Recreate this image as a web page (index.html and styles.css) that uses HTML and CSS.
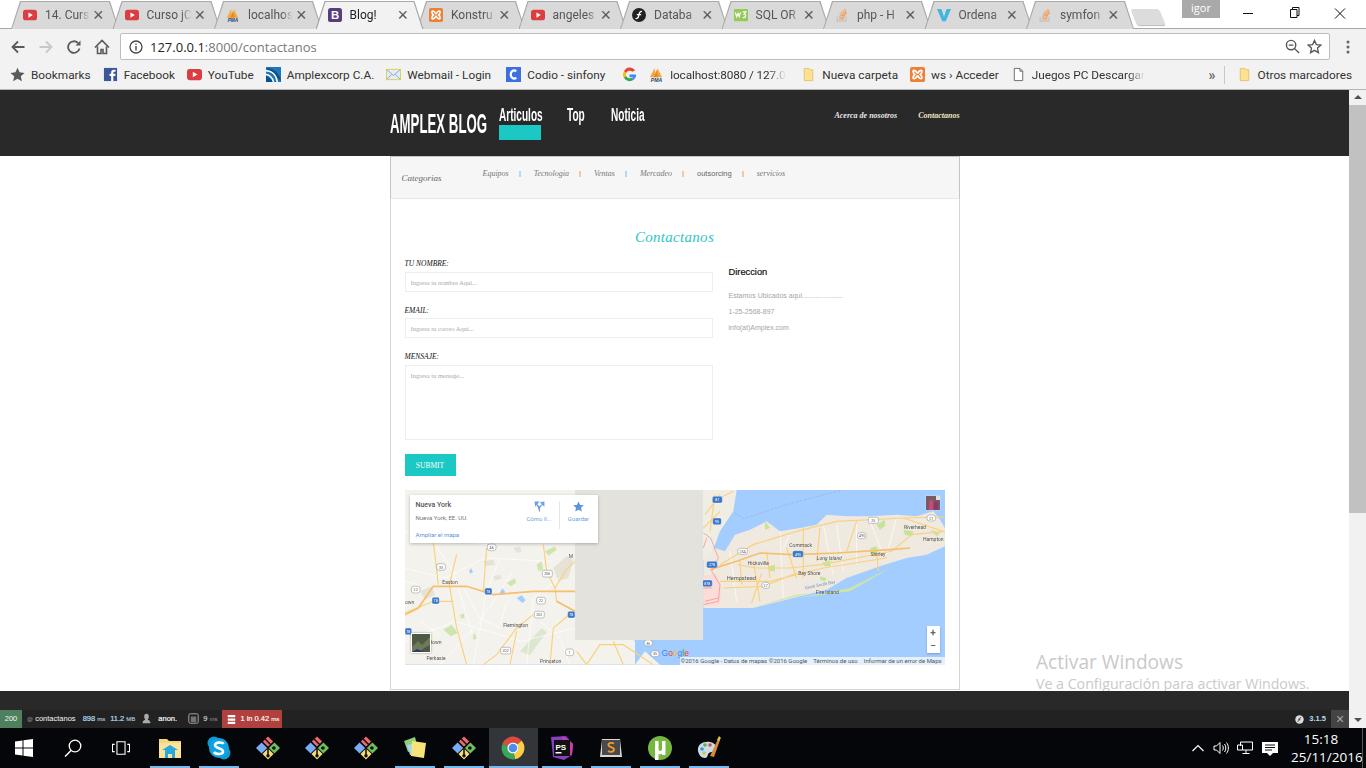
FILE: index.html
```html
<!DOCTYPE html>
<html lang="es">
<head>
  <meta charset="UTF-8" />
  <title>Blog!</title>
  <link rel="stylesheet" href="styles.css">
</head>
<body>
  <!-- iconos compartidos -->
  <svg class="defs" width="0" height="0">
    <symbol id="yt" viewBox="0 0 16 16"><rect y="2" width="16" height="12" rx="3" fill="#dc3d40"/><path d="M6.2 5l5 3-5 3z" fill="#fff"/></symbol>
    <symbol id="pma" viewBox="0 0 16 16"><path d="M1 11L6 1l1 10zM7.500 11L9 1l5 10z" fill="#f5a742"/><path d="M5 11L8 3l2 8z" fill="#e88a1f"/><text x="8" y="16" class="pma-t">PMA</text></symbol>
    <symbol id="boot" viewBox="0 0 16 16"><rect width="16" height="16" rx="3" fill="#563d7c"/><text x="8" y="13" class="boot-t">B</text></symbol>
    <symbol id="xampp" viewBox="0 0 16 16"><rect width="16" height="16" rx="2" fill="#ee7f35"/><path d="M4 3.500c3 0 3 3 4 3s1-3 4-3c1 0 1 3-1 4.500 2 1.500 2 4.500 1 4.500-3 0-3-3-4-3s-1 3-4 3c-1 0-1-3 1-4.500C3 6.500 3 3.500 4 3.500z" fill="none" stroke="#fff" stroke-width="1.800"/></symbol>
    <symbol id="sf" viewBox="0 0 16 16"><circle cx="8" cy="8" r="8" fill="#222"/><path d="M11.500 4c-2.500-.5-3 1-3.500 3.500-.5 3-1 5-4 4.500M5.500 7.500h5" fill="none" stroke="#fff" stroke-width="1.400"/></symbol>
    <symbol id="w3" viewBox="0 0 16 16"><rect y="1" width="16" height="14" rx="1" fill="#95ca5a"/><path d="M1.500 5l1.500 5 1.500-4 1.500 4 1.500-5M10 4.500h3.500l-2 2.500c2.500 0 2.500 4-.5 4l-1-.5" fill="none" stroke="#fff" stroke-width="1.300"/></symbol>
    <symbol id="so" viewBox="0 0 16 16"><path d="M2.500 10v5h10v-5" fill="none" stroke="#c7c1b8" stroke-width="1.300"/><path d="M4.500 12.500h6M4.700 10l6 .8M5.300 7.600l5.800 1.700M6.500 5.200l5.200 3M8.500 3l4 4.300M11 1.200l2 5.300" fill="none" stroke="#f0a061" stroke-width="1.300"/></symbol>
    <symbol id="vue" viewBox="0 0 16 16"><path d="M0 1h5l3 9 3-9h5L10 15H6z" fill="#3fb6e2"/></symbol>
    <symbol id="folder" viewBox="0 0 16 16"><path d="M3.500 1.500h5l1 1.500h3v11.500h-9z" fill="#fde293" stroke="#e3c26a"/></symbol>
    <symbol id="git" viewBox="0 0 28 28"><path d="M8 7l6-6 6 6-6 6z" fill="#ee6a70" transform="translate(0 -0.500)"/><path d="M15 14l6.500-6.500L28 14l-6.500 6.500z" fill="#6fc05c"/><path d="M0 14l6.500-6.500L13 14l-6.500 6.500z" fill="#78aef5"/><path d="M7.500 21l6.500-6.500 6.500 6.500-6.500 6.500z" fill="#f6dc74"/><path d="M10 3l7 7M14 12v10M19 14h3" stroke="#111" stroke-width="1.800" fill="none"/><circle cx="14" cy="23" r="2" fill="#111"/><circle cx="21" cy="14" r="2" fill="#111"/></symbol>
  </svg>

  <header class="chrome-top">
    <div class="tabs">
      <div class="tab"><svg class="fav"><use href="#yt"/></svg><span class="tab-title">14. Curs</span><span class="tab-x">&times;</span></div>
      <div class="tab"><svg class="fav"><use href="#yt"/></svg><span class="tab-title">Curso jC</span><span class="tab-x">&times;</span></div>
      <div class="tab"><svg class="fav"><use href="#pma"/></svg><span class="tab-title">localhos</span><span class="tab-x">&times;</span></div>
      <div class="tab active"><svg class="fav"><use href="#boot"/></svg><span class="tab-title">Blog!</span><span class="tab-x">&times;</span></div>
      <div class="tab"><svg class="fav"><use href="#xampp"/></svg><span class="tab-title">Konstru</span><span class="tab-x">&times;</span></div>
      <div class="tab"><svg class="fav"><use href="#yt"/></svg><span class="tab-title">angeles</span><span class="tab-x">&times;</span></div>
      <div class="tab"><svg class="fav"><use href="#sf"/></svg><span class="tab-title">Databa</span><span class="tab-x">&times;</span></div>
      <div class="tab"><svg class="fav"><use href="#w3"/></svg><span class="tab-title">SQL OR</span><span class="tab-x">&times;</span></div>
      <div class="tab"><svg class="fav"><use href="#so"/></svg><span class="tab-title">php - H</span><span class="tab-x">&times;</span></div>
      <div class="tab"><svg class="fav"><use href="#vue"/></svg><span class="tab-title">Ordena</span><span class="tab-x">&times;</span></div>
      <div class="tab"><svg class="fav"><use href="#so"/></svg><span class="tab-title">symfon</span><span class="tab-x">&times;</span></div>
      <div class="new-tab"></div>
    </div>
    <div class="profile">igor</div>
    <div class="win-btns">
      <svg viewBox="0 0 46 26"><path d="M18 13.500h10" stroke="#111" fill="none"/></svg>
      <svg viewBox="0 0 46 26"><path d="M19.500 9.500h6.500v8h-6.500zM21.500 9.500v-2h6.500v8h-2" stroke="#111" fill="none"/></svg>
      <svg viewBox="0 0 46 26"><path d="M18 8.500l10 10M28 8.500l-10 10" stroke="#111" fill="none"/></svg>
    </div>
  </header>

  <div class="toolbar">
    <svg class="nav-ico" viewBox="0 0 16 16"><path d="M14.500 8H2.500M8 2.500L2.500 8 8 13.500" fill="none" stroke="#5a5a5a" stroke-width="1.800"/></svg>
    <svg class="nav-ico" viewBox="0 0 16 16"><path d="M1.500 8h12M8 2.500L13.500 8 8 13.500" fill="none" stroke="#c8c8c8" stroke-width="1.800"/></svg>
    <svg class="nav-ico" viewBox="0 0 16 16"><path d="M13.500 9.500A5.800 5.800 0 1 1 12 4" fill="none" stroke="#5a5a5a" stroke-width="1.800"/><path d="M14.500 1.500v5h-5z" fill="#5a5a5a"/></svg>
    <svg class="nav-ico" viewBox="0 0 16 16"><path d="M1 8.500L8 1.500l7 7M3.500 7.500v7h3.500v-4h2v4h3.500v-7" fill="none" stroke="#5a5a5a" stroke-width="1.600"/></svg>
    <div class="omnibox">
      <svg class="info" viewBox="0 0 14 14"><circle cx="7" cy="7" r="6" fill="none" stroke="#444" stroke-width="1.300"/><path d="M7 6v4.500M7 3.500v1.300" stroke="#444" stroke-width="1.400"/></svg>
      <span class="url">127.0.0.1<span class="url-dim">:8000/contactanos</span></span>
      <svg class="omni-zoom" viewBox="0 0 16 16"><circle cx="6.500" cy="6.500" r="5" fill="none" stroke="#555" stroke-width="1.500"/><path d="M10 10l5 5M4 6.500h5" stroke="#555" stroke-width="1.500"/></svg>
      <svg class="omni-star" viewBox="0 0 16 16"><path d="M8 1.500l2 4.500 4.800.5-3.600 3.200 1 4.800L8 12.100l-4.200 2.400 1-4.800L1.200 6.500 6 6z" fill="none" stroke="#555" stroke-width="1.400"/></svg>
    </div>
    <svg class="menu-dots" viewBox="0 0 4 16"><circle cx="2" cy="3" r="1.500"/><circle cx="2" cy="8" r="1.500"/><circle cx="2" cy="13" r="1.500"/></svg>
  </div>

  <div class="bookmarks">
    <span class="bm"><svg class="fav" viewBox="0 0 16 16"><path d="M8 .800l2.200 4.900 5.300.6-4 3.500 1.200 5.300L8 12.400l-4.700 2.700 1.200-5.300-4-3.500 5.300-.6z" fill="#5a5a5a"/></svg>Bookmarks</span>
    <span class="bm"><svg class="fav" viewBox="0 0 16 16"><rect x="1" y="1" width="14" height="14" fill="#3b5998"/><path d="M11 15V9.500h2l.3-2.300H11V6c0-.7.300-1 1-1h1.300V3h-1.800C9.700 3 8.700 4 8.700 5.700v1.500H7v2.300h1.700V15z" fill="#fff"/></svg>Facebook</span>
    <span class="bm"><svg class="fav"><use href="#yt"/></svg>YouTube</span>
    <span class="bm"><svg class="fav" viewBox="0 0 16 16"><rect width="16" height="16" fill="#1d77bd"/><path d="M0 9l9 7H0zM0 1c8 0 15 6 16 14" fill="#0b4f88"/><path d="M0 4c6 0 11 4 12 12M0 8c3 0 7 3 8 8" fill="none" stroke="#fff" stroke-width="1.600"/></svg>Amplexcorp C.A.</span>
    <span class="bm bm-mail"><svg class="fav" viewBox="0 0 16 16"><rect x=".5" y="2.500" width="15" height="11" fill="#e4edf7" stroke="#d9d24f"/><path d="M1 3l7 6 7-6M1 13l5-5M15 13l-5-5" fill="none" stroke="#8aa3bf"/></svg>Webmail - Login</span>
    <span class="bm bm-codio"><svg class="fav" viewBox="0 0 16 16"><rect width="16" height="16" fill="#3c6fe0"/><path d="M11 4.500c-3-2-6 0-6 3.500s3 5.500 6 3.500" fill="none" stroke="#fff" stroke-width="2.400"/></svg>Codio - sinfony</span>
    <span class="bm"><svg class="fav" viewBox="0 0 16 16"><path d="M14 3.500A7 7 0 0 0 2 4.500l2.500 2A4 4 0 0 1 11 5z" fill="#ea4335"/><path d="M2 4.500a7 7 0 0 0 0 7l2.500-2a4 4 0 0 1 0-3z" fill="#fbbc05"/><path d="M2 11.500a7 7 0 0 0 10.500 2l-2.300-2A4 4 0 0 1 4.500 9.500z" fill="#34a853"/><path d="M15 8H8v3h3.800c-.3.600-.8 1.100-1.600.6l2.300 2C14.300 12 15.300 10 15 8z" fill="#4285f4"/></svg></span>
    <span class="bm bm-fade bm-pma"><svg class="fav"><use href="#pma"/></svg><span>localhost:8080 / 127.0</span></span>
    <span class="bm bm-folder"><svg class="fav"><use href="#folder"/></svg>Nueva carpeta</span>
    <span class="bm"><svg class="fav"><use href="#xampp"/></svg>ws › Acceder</span>
    <span class="bm bm-fade bm-juegos"><svg class="fav" viewBox="0 0 16 16"><path d="M3.500 1.500h6l3 3v10h-9zM9.500 1.500v3h3" fill="#fff" stroke="#666"/></svg><span>Juegos PC Descargar</span></span>
    <span class="bm-more">»</span>
    <span class="bm-sep"></span>
    <span class="bm"><svg class="fav"><use href="#folder"/></svg>Otros marcadores</span>
  </div>

  <div class="screen">
    <div class="viewport">
      <div class="site-head">
        <div class="site-inner">
          <a class="logo"><span>AMPLEX BLOG</span></a>
          <nav class="main-nav">
            <a class="active"><span>Articulos</span></a>
            <a><span>Top</span></a>
            <a><span>Noticia</span></a>
          </nav>
          <nav class="side-nav">
            <a>Acerca de nosotros</a>
            <a class="side-on">Contactanos</a>
          </nav>
        </div>
      </div>

      <main class="site-main">
        <div class="box">
          <div class="cats">
            <span class="cats-title">Categorias</span>
            <ul class="cats-list">
              <li>Equipos</li>
              <li>Tecnologia</li>
              <li>Ventas</li>
              <li>Mercadeo</li>
              <li class="sans">outsorcing</li>
              <li>servicios</li>
            </ul>
          </div>

          <div class="content">
            <h2>Contactanos</h2>
            <div class="contact">
              <form class="contact-form">
                <div class="field">
                  <label>TU NOMBRE:</label>
                  <input type="text" placeholder="Ingresa tu nombre Aqui...">
                </div>
                <div class="field">
                  <label>EMAIL:</label>
                  <input type="text" placeholder="Ingresa tu correo Aqui...">
                </div>
                <div class="field field-msg">
                  <label>MENSAJE:</label>
                  <textarea placeholder="Ingresa tu mensaje..."></textarea>
                </div>
                <button type="button" class="submit">SUBMIT</button>
              </form>
              <div class="address">
                <h4>Direccion</h4>
                <p>Estamos Ubicados aqui.....................</p>
                <p>1-25-2568-897</p>
                <p>info(at)Amplex.com</p>
              </div>
            </div>

            <div class="map">
              <svg class="map-svg" viewBox="0 0 540 175" width="540" height="175">
                <rect width="540" height="175" fill="#a3ccff"/>
                <!-- tierra oeste -->
                <g transform="translate(-5 -2) scale(.3333)">
                  <rect x="15" y="6" width="690" height="524" fill="#f4f2ec"/>
                  <path d="M700 455h140v75h-50l-50-45z" fill="#a3ccff"/>
                  <path d="M705 530l30-40 45 40z" fill="#f4f2ec"/>
                  <g fill="#cfe5b0">
                    <path d="M130 425l25-15 18 25-20 10z"/>
                    <path d="M435 190l30-15 5 10-25 18z"/>
                    <path d="M320 285l25-15 3 15-15 10z"/>
                    <path d="M410 230l15-10 5 25-15 5z"/>
                    <path d="M180 380l12-3 2 12-10 3z"/>
                    <path d="M215 440l10-3 5 15-10 3z"/>
                  </g>
                  <path d="M360 490l65-70 15 12-50 70z" fill="#dde6cf"/>
                  <g fill="#e6e2d6">
                    <path d="M60 310l35-15 10 25-30 15z"/>
                    <path d="M460 240l40-35 20 10-15 55-30 10z"/>
                    <path d="M250 220l30-5 5 15-30 5z"/>
                    <path d="M340 180l20-5 5 15-15 5z"/>
                    <path d="M280 265l20-5 5 12-20 5z"/>
                  </g>
                  <g fill="#a3ccff">
                    <path d="M350 330l15-8 12 15-10 8z"/>
                    <path d="M298 315l8-15 10 12-8 8z"/>
                    <path d="M207 250l6-10 6 12-8 5z"/>
                  </g>
                  <g fill="none" stroke="#fff" stroke-width="2">
                    <path d="M15 240l120 30 120-60 200 10M15 460l150-60 200 60 160-40M220 530l40-220 40-100M380 530l20-200 80-60"/>
                    <path d="M60 100l100 150 60 200M120 530l120-130 100-150M15 130l240 40 180-50M190 300l50 90 60 30M420 400l60 50 30 80M320 340l-20 70M60 400l60 40M15 280l40 10"/>
                  </g>
                  <g fill="none" stroke="#fad17f" stroke-width="3.500">
                    <path d="M100 160l15 130M170 200l-22 90 22 130 30 110M430 170l10 80 25 50 5 40 55 30"/>
                    <path d="M260 180l-10 130M350 430l-20 100M400 380l-50 40-60 80-40 30M450 530l10-110 60-50"/>
                    <path d="M15 375l85-35 60 0M465 300l30-50 30-30"/>
                    <path d="M560 530l40-60 70 0 90 60M640 460l30 70M530 490l30 40"/>
                  </g>
                  <path d="M15 380l40-20 45-65h100l80 25 120-10h125M470 340l55 30" fill="none" stroke="#f7bf6b" stroke-width="5"/>
                  <g class="map-label">
                    <text x="150" y="288" text-anchor="middle">Easton</text>
                    <text x="347" y="416" text-anchor="middle">Flemington</text>
                    <text x="15" y="347">own</text>
                    <text x="92" y="467">town</text>
                    <text x="108" y="515" text-anchor="middle">Perkasie</text>
                    <text x="452" y="526" text-anchor="middle">Princeton</text>
                    <text x="506" y="210">M</text>
                  </g>
                  <g class="shield">
                    <rect x="110" y="227" width="26" height="20" rx="7"/><text x="123" y="242">33</text>
                    <rect x="34" y="295" width="26" height="20" rx="7"/><text x="47" y="310">22</text>
                    <rect x="262" y="168" width="26" height="20" rx="7"/><text x="275" y="183">46</text>
                    <rect x="427" y="247" width="30" height="20" rx="5"/><text x="442" y="262">206</text>
                    <rect x="410" y="328" width="26" height="20" rx="5"/><text x="423" y="343">22</text>
                    <rect x="403" y="370" width="30" height="20" rx="5"/><text x="418" y="385">202</text>
                    <rect x="302" y="478" width="30" height="20" rx="5"/><text x="317" y="493">202</text>
                    <rect x="497" y="483" width="24" height="20" rx="7"/><text x="509" y="498">1</text>
                    <rect x="733" y="456" width="24" height="18" rx="7"/><text x="745" y="470">36</text>
                    <rect x="753" y="488" width="24" height="18" rx="7"/><text x="765" y="502">35</text>
                  </g>
                  <g class="shield-i">
                    <rect x="96" y="328" width="22" height="20" rx="5"/><text x="107" y="343">78</text>
                    <rect x="254" y="300" width="22" height="20" rx="5"/><text x="265" y="315">78</text>
                    <rect x="503" y="370" width="22" height="20" rx="5"/><text x="514" y="385">78</text>
                    <rect x="15" y="420" width="20" height="20" rx="5"/><text x="25" y="435">78</text>
                  </g>
                </g>
                <!-- long island -->
                <g transform="translate(265 -2) scale(.3333)">
                  <path d="M-40 6h240l-10 64-40 60-15 40-15 40-30 10-30 30H-40z" fill="#f0ede4"/>
                  <path d="M100 215l35-35 30 10 30-50 45-15 50-25 40 30 60-10 50-10 30-30 60 5 70 0 80-5 60 5 50-15 20 25 15 25 10 50-65 30-60 10-80 25-100 35-60 35-80 20-80 20-60 15H100z" fill="#efe9df"/>
                  <path d="M100 265l40-10 15 45-5 50-50 5z" fill="#fbdcd8"/>
                  <path d="M240 360l140-40 40-5-140 35zM380 330l160-30 130-65-130 75z" fill="#cfe5a6"/>
                  <g fill="#c6e39a">
                    <path d="M285 100l15 20-15 5z"/>
                    <path d="M295 235l20-5 0 20-15 0z"/>
                    <path d="M455 225l30-10 0 20-20 0z"/>
                    <path d="M450 265l20 5-5 10-15-5z"/>
                    <path d="M620 110l25-15 0 20-15 10z"/>
                    <path d="M600 180l20-5 5 25-15 5z"/>
                    <path d="M700 125l30 5-5 15-20-5z"/>
                    <path d="M780 125l30 10-10 10z"/>
                  </g>
                  <g fill="none" stroke="#fff" stroke-width="2">
                    <path d="M460 110l30 150M560 100l0 130M680 90l-30 110M330 130l10 200M600 100l40 100M500 110l20 140M180 190l20 150M360 140l-20 40"/>
                  </g>
                  <g fill="none" stroke="#fad17f" stroke-width="3.500">
                    <path d="M150 230l100-60 130-40 120-30 200-10 180-5"/>
                    <path d="M205 230l50 10 100 0 100-10 210-40 60-50 100-10"/>
                    <path d="M250 220l20 120M290 190l10 80M400 120l0 150M530 190l30-90M620 190l5 60M245 345l30-90M210 220l5 70M350 180l30 90M450 120l-10 100"/>
                    <path d="M150 280l150 0 160-40 190-30M160 300l120-5 100-40"/>
                    <path d="M700 90l120 40M130 40l60-30M120 130l15-110M105 80l45-60M100 120l50-50"/>
                  </g>
                  <path d="M120 245l80-25 70-25 100 5 130-5 160-10 60-5" fill="none" stroke="#f7bf6b" stroke-width="5"/>
                  <path d="M100 135l22 15 8 20 15 40-20 40 25 40-5 50-45 10M100 300h25M110 150l-10 30M105 340l40-10" fill="none" stroke="#ef7d7d" stroke-width="1.800"/>
                  <path d="M195 75l25 17 130-42L520 5" fill="none" stroke="#9aa5b3" stroke-width="1.500" stroke-dasharray="8 5"/>
                  <g class="map-label">
                    <text x="392" y="177" text-anchor="middle">Commack</text>
                    <text x="265" y="230" text-anchor="middle">Hicksville</text>
                    <text x="214" y="276" text-anchor="middle" class="big">Hempstead</text>
                    <text x="478" y="215" text-anchor="middle" font-style="italic">Long Island</text>
                    <text x="418" y="262" text-anchor="middle">Bay Shore</text>
                    <text x="624" y="205" text-anchor="middle">Shirley</text>
                    <text x="735" y="122" text-anchor="middle">Riverhead</text>
                    <text x="790" y="158" text-anchor="middle">Hampton</text>
                    <text x="472" y="317" text-anchor="middle">Fire Island</text>
                    <text x="450" y="295" text-anchor="middle" class="bay" transform="rotate(-12 450 290)">Great South Bay</text>
                  </g>
                  <g class="shield">
                    <rect x="203" y="181" width="30" height="18" rx="8"/><text x="218" y="195">25A</text>
                    <rect x="276" y="283" width="22" height="18" rx="7"/><text x="287" y="297">27</text>
                    <rect x="595" y="88" width="30" height="18" rx="5"/><text x="610" y="102">25</text>
                    <rect x="563" y="134" width="26" height="18" rx="8"/><text x="576" y="148">495</text>
                    <rect x="771" y="81" width="26" height="18" rx="8"/><text x="784" y="95">27</text>
                  </g>
                  <g class="shield-i">
                    <rect x="368" y="188" width="32" height="20" rx="5"/><text x="384" y="203">495</text>
                    <rect x="110" y="220" width="32" height="20" rx="5"/><text x="126" y="235">278</text>
                    <rect x="127" y="25" width="30" height="20" rx="5"/><text x="142" y="40">87</text>
                    <rect x="128" y="90" width="26" height="20" rx="5"/><text x="141" y="105">95</text>
                    <rect x="97" y="276" width="30" height="20" rx="5"/><text x="112" y="291">878</text>
                  </g>
                </g>
                <rect x="170" width="128" height="150" fill="#e3e2dd"/>
              </svg>

              <div class="map-card">
                <div class="map-place">
                  <strong>Nueva York</strong>
                  <span>Nueva York, EE. UU.</span>
                </div>
                <div class="map-act map-act-how">
                  <svg viewBox="0 0 14 14"><path d="M7 13.500V8L3 4M7 8l4-4M1.500 1.500h4l-3.500 4zM12.500 1.500v4l-3.500-3.500z" fill="#6b9fe4" stroke="#6b9fe4" stroke-width="1.500"/></svg>
                  <span>Cómo ll...</span>
                </div>
                <div class="map-act map-act-save">
                  <svg viewBox="0 0 14 14"><path d="M7 .500l2 4.500 4.800.5-3.600 3.200 1 4.800L7 11l-4.200 2.500 1-4.800L.2 5.500 5 5z" fill="#5a93e0"/></svg>
                  <span>Guardar</span>
                </div>
                <a class="map-more">Ampliar el mapa</a>
              </div>

              <div class="map-thumb-sv">
                <svg viewBox="0 0 18 18"><rect width="18" height="18" fill="#4f5a44"/><path d="M0 13l6-6 4 4 8-8v8l-6 3-4 4H0z" fill="#6f7a5c"/><path d="M0 18l5-3 8 3z" fill="#2b3d63"/></svg>
              </div>
              <div class="map-thumb-user">
                <svg viewBox="0 0 14 14"><rect width="14" height="14" fill="#7a5a62"/><path d="M3 14V6l2-3 2 3v8z" fill="#c84a78"/><path d="M8 14V7l2-3 2 3v7z" fill="#8a3a6a"/><rect x="10" y="0" width="4" height="4" fill="#dfe5d5"/></svg>
              </div>
              <div class="map-zoom">
                <span>+</span>
                <span>−</span>
              </div>
              <span class="map-google"><b class="g1">G</b><b class="g2">o</b><b class="g3">o</b><b class="g1">g</b><b class="g4">l</b><b class="g2">e</b></span>
              <div class="map-attr">
                <span>©2016 Google - Datos de mapas ©2016 Google</span>
                <span>Términos de uso</span>
                <span>Informar de un error de Maps</span>
              </div>
            </div>
          </div>
        </div>
      </main>

      <div class="activate">
        <div class="activate-big">Activar Windows</div>
        <div class="activate-small">Ve a Configuración para activar Windows.</div>
      </div>

      <div class="site-foot"></div>

      <div class="debug">
        <span class="d-status">200</span>
        <span class="d-item d-route"><i>@</i> contactanos</span>
        <span class="d-item d-blue">898 <i>ms</i></span>
        <span class="d-item d-blue">11.2 <i>MB</i></span>
        <svg class="d-ico" viewBox="0 0 14 14"><path d="M7 1c-2 0-3 1.500-3 3.500S5 8 5.500 8.500C3 9.500 2 10.500 2 13h10c0-2.500-1-3.500-3.500-4.500C9 8 10 6.500 10 4.500S9 1 7 1z" fill="#aaa"/></svg>
        <span class="d-item d-bold">anon.</span>
        <svg class="d-ico d-ico-time" viewBox="0 0 14 14"><rect x="1" y="1" width="12" height="12" rx="2" fill="none" stroke="#aaa" stroke-width="1.200"/><rect x="3.500" y="4.500" width="7" height="7" fill="#aaa" opacity=".6"/></svg>
        <span class="d-item d-time">9 <i>ms</i></span>
        <span class="d-db">
          <svg viewBox="0 0 12 14"><path d="M1 1h10v3H1zM1 5.500h10v3H1zM1 10h10v3H1z" fill="#fff"/></svg>
          1 in 0.42 <i>ms</i>
        </span>
        <span class="d-version">
          <svg viewBox="0 0 16 16"><circle cx="8" cy="8" r="7.500" fill="#ddd"/><path d="M11 4.500c-2-.5-2.500 1-3 3-.5 2.500-1 4-3.500 3.500M5.500 7.500h4" fill="none" stroke="#222" stroke-width="1.300"/></svg>
          3.1.5
        </span>
        <span class="d-close">&times;</span>
      </div>
    </div>

    <div class="scrollbar">
      <span class="arrow up"></span>
      <span class="thumb"></span>
      <span class="arrow down"></span>
    </div>
  </div>

  <footer class="taskbar">
    <div class="tb-cell sys"><svg viewBox="0 0 18 18" class="tb-sys"><path d="M0 2.500l7.500-1v7H0zM8.500 1.300L18 0v8.500H8.500zM0 9.500h7.500v7l-7.500-1zM8.500 9.500H18V18l-9.500-1.300z" fill="#fff"/></svg></div>
    <div class="tb-cell sys"><svg viewBox="0 0 18 18" class="tb-sys"><circle cx="11" cy="7" r="5.800" fill="none" stroke="#fff" stroke-width="1.300"/><path d="M7 11.500L1 17.500" stroke="#fff" stroke-width="1.500"/></svg></div>
    <div class="tb-cell sys"><svg viewBox="0 0 20 18" class="tb-sys"><path d="M5.500 2h9v14h-9zM3 5H.5v8H3M17 5h2.500v8H17" fill="none" stroke="#fff" stroke-width="1.200"/></svg></div>

    <div class="tb-cell app run"><svg viewBox="0 0 24 24"><path d="M1 3h8l2 2h12v17H1z" fill="#f6d67c"/><path d="M1 7h22v15H1z" fill="#fbe39b"/><path d="M7 22v-8h10v8h-3v-4h-4v4z" fill="#29a8e0"/><path d="M4 14l8-5 8 5z" fill="#29a8e0"/></svg></div>
    <div class="tb-cell app run"><svg viewBox="0 0 24 24"><circle cx="7" cy="7" r="6.500" fill="#0b9ad6"/><circle cx="17" cy="17" r="6.500" fill="#0b9ad6"/><circle cx="12" cy="12" r="10" fill="#0fa3e0"/><path d="M16.500 8c-1-2-8-2.500-8.500 1s8 3 8 6.500-7.500 3-9 .5" fill="none" stroke="#fff" stroke-width="2.600"/></svg></div>
    <div class="tb-cell app"><svg viewBox="0 0 28 28"><use href="#git"/></svg></div>
    <div class="tb-cell app"><svg viewBox="0 0 28 28"><use href="#git"/></svg></div>
    <div class="tb-cell app"><svg viewBox="0 0 28 28"><use href="#git"/></svg></div>
    <div class="tb-cell app run"><svg viewBox="0 0 24 24"><path d="M1 5l11-4 3 11-10 4z" fill="#8fce7d"/><path d="M4 9l9-2 2 11-8 1z" fill="#a5d6ef"/><path d="M9 5l14 2-2 15-13-2z" fill="#f8e27a"/></svg></div>
    <div class="tb-cell app run"><svg viewBox="0 0 28 28"><use href="#git"/></svg></div>
    <div class="tb-cell app run on"><svg viewBox="0 0 24 24"><g fill="none" stroke-width="6" stroke-dasharray="17.600 52.800"><circle cx="12" cy="12" r="8.400" stroke="#dd4b3e" transform="rotate(-160 12 12)"/><circle cx="12" cy="12" r="8.400" stroke="#ffce43" transform="rotate(-40 12 12)"/><circle cx="12" cy="12" r="8.400" stroke="#3aa757" transform="rotate(80 12 12)"/></g><circle cx="12" cy="12" r="5.600" fill="#fff"/><circle cx="12" cy="12" r="4.300" fill="#4d8df0"/></svg></div>
    <div class="tb-cell app run"><svg viewBox="0 0 24 24"><path d="M1 1l15-1 7 8-1 11-8 5-11-3z" fill="#8a3fc0"/><path d="M12 0l11 8-1 11-6-1z" fill="#d13bb0"/><rect x="4" y="4" width="16" height="16" fill="#111"/><text x="5.500" y="13.500" class="ps-t">PS</text><rect x="5.500" y="16" width="6" height="1.500" fill="#fff"/></svg></div>
    <div class="tb-cell app run"><svg viewBox="0 0 24 24"><path d="M3 3h18l2 18H1z" fill="#d8d8d8"/><rect x="3" y="4" width="18" height="15" fill="#4a4a4a"/><path d="M15 7.500c-3-1.500-6 0-5.500 2S15 11 15 13.500s-4 3-6 1.500" fill="none" stroke="#f09a2e" stroke-width="1.800"/></svg></div>
    <div class="tb-cell app run"><svg viewBox="0 0 24 24"><circle cx="12" cy="12" r="12" fill="#76b83f"/><path d="M7 5h3.500v8c0 2.500 3.500 2.500 3.500 0V5h3.500v14H14v-1.800c-1 1.300-2.500 1.500-3.500 .8V24H7z" fill="#fff"/></svg></div>
    <div class="tb-cell app run"><svg viewBox="0 0 24 24"><path d="M1 15C0 8 7 5 13 6c6 1 8 6 5 9-2 2-4 0-6 2s-1 5-4 5c-4 0-6-3-7-7z" fill="#c9dcec"/><circle cx="5" cy="13" r="1.800" fill="#3d8fd6"/><circle cx="8" cy="9" r="1.800" fill="#5db04a"/><circle cx="13" cy="9" r="1.800" fill="#e3483c"/><circle cx="7" cy="17" r="1.800" fill="#e6b93a"/><path d="M13 20L21 3l2 1-6 17z" fill="#d98a35"/><path d="M20 4l2-4 2 2-2 3z" fill="#e6c24a"/></svg></div>

    <div class="tray">
      <svg viewBox="0 0 12 8" class="tray-up"><path d="M.5 7L6 1.500 11.500 7" fill="none" stroke="#fff" stroke-width="1.200"/></svg>
      <svg viewBox="0 0 16 14" class="tray-ico"><path d="M1 5h2.500L7 1.500v11L3.500 9H1zM9.500 4.500c1 1.500 1 3.500 0 5M11.500 3c1.800 2.300 1.800 5.700 0 8M13.500 1.500c2.500 3.300 2.500 7.700 0 11" fill="none" stroke="#fff"/></svg>
      <svg viewBox="0 0 16 14" class="tray-ico tray-net"><path d="M3.500 5V1h12v8H5.500M.5 4h5v5h-5zM9 9v3M5.500 12.500h7" fill="none" stroke="#fff"/></svg>
      <svg viewBox="0 0 16 16" class="tray-note"><path d="M0 1h16v11h-5l-3 3-3-3H0z" fill="#fff"/><path d="M3 4h10M3 6.500h10M3 9h7" stroke="#111"/></svg>
      <div class="clock"><div>15:18</div><div>25/11/2016</div></div>
      <span class="show-desk"></span>
    </div>
  </footer>
</body>
</html>
```

FILE: styles.css
```css
* {
  box-sizing: border-box;
}
html, body {
  margin: 0;
  padding: 0;
}
body {
  width: 1366px;
  height: 768px;
  overflow: hidden;
  display: flex;
  flex-direction: column;
  font-family: 'Open Sans', 'Noto Sans', sans-serif;
  background: #fff;
  color: #333;
}
.defs {
  display: none;
}
svg {
  display: block;
  flex: none;
}
.fav {
  width: 14px;
  height: 14px;
}

/* pestañas */
.chrome-top {
  position: relative;
  height: 29px;
  flex: none;
  background: #fff;
}
.tabs {
  display: flex;
  height: 29px;
  padding: 1px 0 0 11px;
  align-items: stretch;
  border-bottom: 1px solid #a9a9a9;
}
.tab {
  position: relative;
  width: 108px;
  margin-right: -6.5px;
  display: flex;
  align-items: center;
  padding-left: 12px;
  font-family: 'Roboto', sans-serif;
  font-size: 12px;
  color: #555;
}
.tab::before, .tab::after {
  content: "";
  position: absolute;
  inset: 0 0 -1px 0;
  clip-path: polygon(0 100%, 9px 0, calc(100% - 9px) 0, 100% 100%);
  background: #a9a9a9;
  z-index: 0;
}
.tab::after {
  inset: 1px 1px -1px 1px;
  background: #d9d9d9;
}
.tab > * {
  position: relative;
  z-index: 1;
}
.tab.active {
  z-index: 3;
  color: #222;
}
.tab.active::after {
  background: #f2f2f2;
  inset: 1px 1px -2px 1px;
}
.tab .fav {
  margin-right: 8px;
}
.tab-title {
  width: 45px;
  white-space: nowrap;
  overflow: hidden;
  -webkit-mask-image: linear-gradient(90deg, #000 75%, transparent);
  mask-image: linear-gradient(90deg, #000 75%, transparent);
}
.tab-x {
  margin-left: 3px;
  font-size: 18px;
  line-height: 14px;
  width: 10px;
  text-align: center;
  color: #5a5a5a;
  font-family: 'Liberation Sans', sans-serif;
}
.new-tab {
  width: 28px;
  height: 16px;
  margin: 8px 0 0 6px;
  background: #dcdcdc;
  transform: skewX(22deg);
  border-radius: 2px;
  box-shadow: 0 1px 1px #bbb;
  position: relative;
  z-index: 1;
}
.profile {
  position: absolute;
  top: 0;
  left: 1182px;
  width: 38px;
  height: 18px;
  background: #a9a9a9;
  color: #fff;
  font-size: 11px;
  line-height: 16px;
  text-align: center;
}
.win-btns {
  position: absolute;
  top: 0;
  right: 3px;
  display: flex;
}
.win-btns svg {
  width: 46px;
  height: 26px;
}

/* barra de direccion */
.toolbar {
  height: 32px;
  flex: none;
  background: #f2f2f2;
  display: flex;
  align-items: center;
  padding: 3px 0 0 10px;
  position: relative;
  z-index: 2;
}
.nav-ico {
  width: 16px;
  height: 16px;
  margin-right: 12px;
}
.omnibox {
  width: 1210px;
  height: 27px;
  margin: 0 0 0 -2px;
  background: #fff;
  border: 1px solid #bdbdbd;
  border-radius: 2px;
  display: flex;
  align-items: center;
  padding-left: 8px;
  font-size: 13px;
}
.info {
  width: 14px;
  height: 14px;
  margin-right: 7px;
}
.url {
  color: #222;
  flex: 1;
}
.url-dim {
  color: #777;
}
.omni-zoom, .omni-star {
  width: 15px;
  height: 15px;
}
.omni-star {
  margin: 0 7px 0 7px;
}
.menu-dots {
  width: 4px;
  height: 16px;
  margin-left: 16px;
  fill: #666;
}

/* marcadores */
.bookmarks {
  height: 29px;
  flex: none;
  background: #f2f2f2;
  border-bottom: 1px solid #b5b5b5;
  display: flex;
  align-items: center;
  gap: 12px;
  padding: 0 14px 1px 10px;
  font-family: 'Roboto', sans-serif;
  font-size: 11.800px;
  color: #333;
  white-space: nowrap;
}
.bm {
  display: flex;
  align-items: center;
  gap: 6px;
}
.bm .fav {
  width: 15px;
  height: 15px;
}
.bm-mail {
  width: 108px;
}
.bm-codio {
  width: 104px;
}
.bm-fade span {
  overflow: hidden;
  -webkit-mask-image: linear-gradient(90deg, #000 85%, transparent);
  mask-image: linear-gradient(90deg, #000 85%, transparent);
}
.bm-pma {
  width: 137px;
}
.bm-pma span {
  letter-spacing: -.12px;
}
.bm-folder {
  margin-left: 3px;
}
.bm-juegos {
  width: 135px;
}
.bm-more {
  margin-left: auto;
  font-size: 14px;
  font-weight: 700;
  color: #666;
}
.bm-sep {
  width: 1px;
  height: 18px;
  background: #c8c8c8;
  margin-left: -4px;
}

/* pagina */
.screen {
  flex: 1;
  display: flex;
  min-height: 0;
}
.viewport {
  flex: 1;
  display: flex;
  flex-direction: column;
  position: relative;
  min-width: 0;
}
.site-head {
  height: 66px;
  flex: none;
  background: #292929;
}
.site-inner {
  width: 570px;
  margin: 0 auto;
  height: 66px;
  display: flex;
  color: #fff;
}
.logo {
  width: 97px;
  margin: 22px 12px 0 0;
  font-family: 'Liberation Sans', sans-serif;
  font-weight: 700;
  font-size: 28px;
  line-height: 24px;
  white-space: nowrap;
}
.logo span {
  display: inline-block;
  transform-origin: 0 50%;
  transform: scaleX(.473);
}
.main-nav {
  display: flex;
  gap: 26px;
  font-family: 'Liberation Sans', sans-serif;
  font-weight: 700;
  font-size: 18px;
}
.main-nav a {
  display: block;
  height: 50px;
  padding-top: 16px;
  line-height: 18px;
  white-space: nowrap;
}
.main-nav a span {
  display: inline-block;
  transform-origin: 0 50%;
  transform: scaleX(.56);
}
.main-nav a:nth-child(1) {
  width: 42px;
  border-bottom: 15px solid #1bc8c4;
}
.main-nav a:nth-child(2) {
  width: 18px;
}
.main-nav a:nth-child(3) {
  width: 34px;
}
.side-nav {
  margin-left: auto;
  display: flex;
  gap: 21px;
  padding-top: 21px;
  font-family: 'Liberation Serif', serif;
  font-style: italic;
  font-weight: 700;
  font-size: 8px;
  line-height: 9px;
  color: #e8e8e8;
}
.side-on {
  color: #f3e6c8;
}
.site-main {
  flex: 1;
  min-height: 0;
  overflow: hidden;
}
.box {
  width: 570px;
  height: 534px;
  margin: 0 auto;
  border: 1px solid #d5d5d5;
  border-top: 0;
  background: #fff;
}
.cats {
  height: 43px;
  background: #f6f6f6;
  border: 1px solid #c4c4c4;
  border-bottom-color: #e6e6e6;
  margin: 0 -1px;
  display: flex;
  font-family: 'Liberation Serif', serif;
  font-style: italic;
  color: #777;
}
.cats-title {
  width: 81px;
  margin-left: 11px;
  padding-top: 16px;
  font-size: 9px;
  line-height: 10px;
  color: #666;
}
.cats-list {
  list-style: none;
  margin: 0;
  padding: 12px 0 0;
  display: flex;
  font-size: 8px;
  line-height: 9px;
}
.cats-list li {
  display: flex;
}
.cats-list li:not(:last-child)::after {
  content: "";
  width: 2px;
  height: 6px;
  margin: 2px 13px 0 10px;
  background: #b9d8ee;
}
.cats-list li:nth-child(2)::after, .cats-list li:nth-child(4)::after, .cats-list li:nth-child(5)::after {
  background: #eccba6;
}
.cats-list .sans {
  font-family: 'Liberation Sans', sans-serif;
  font-style: normal;
  color: #666;
  font-size: 7.500px;
}
.content {
  padding: 30px 14px 0;
}
.content h2 {
  margin: 0;
  font-family: 'Liberation Serif', serif;
  font-style: italic;
  font-weight: 400;
  font-size: 15px;
  line-height: 16px;
  letter-spacing: .3px;
  text-align: center;
  color: #2fc6c2;
}
.contact {
  display: flex;
  gap: 16px;
  margin-top: 14px;
}
.contact-form {
  width: 308px;
}
.field {
  margin-top: 14px;
}
.field:first-child {
  margin-top: 0;
}
.field label {
  display: block;
  margin-bottom: 3px;
  font-family: 'Liberation Serif', serif;
  font-style: italic;
  font-size: 7.500px;
  line-height: 9px;
  color: #111;
}
.field:first-child label, .field-msg label {
  margin-bottom: 4px;
}
.field input, .field textarea {
  display: block;
  width: 308px;
  height: 20px;
  padding: 0 5px;
  border: 1px solid #eee;
  outline: none;
  background: #fff;
  font-family: 'Liberation Serif', serif;
  font-size: 6.500px;
  resize: none;
}
.field textarea {
  height: 75px;
  padding-top: 6px;
}
.field input::placeholder, .field textarea::placeholder {
  color: #aaa;
  opacity: 1;
}
.submit {
  display: block;
  width: 51px;
  height: 22px;
  margin-top: 14px;
  padding: 0;
  border: 0;
  background: #1bc8c4;
  color: #fff;
  font-family: 'Liberation Serif', serif;
  font-size: 7.500px;
}
.address {
  padding-top: 7px;
  font-family: 'Liberation Sans', sans-serif;
  font-size: 7px;
  color: #a5a5a5;
}
.address h4 {
  margin: 0 0 10px;
  font-size: 9.300px;
  line-height: 12px;
  font-weight: 400;
  color: #111;
  -webkit-text-stroke: .2px #111;
}
.address p {
  margin: 0;
  line-height: 16px;
}

/* mapa */
.map {
  position: relative;
  width: 540px;
  height: 175px;
  margin-top: 14px;
  overflow: hidden;
  font-family: 'Roboto', 'Liberation Sans', sans-serif;
}
.map-svg {
  filter: blur(.35px);
}
.map-label text {
  font-family: 'Roboto', 'Liberation Sans', sans-serif;
  font-size: 15px;
  fill: #555;
}
.map-label .big {
  font-size: 17px;
}
.map-label .bay {
  fill: #6c93c9;
  font-size: 13px;
}
.shield rect {
  fill: #fff;
  stroke: #888;
  stroke-width: 1.500;
}
.shield text, .shield-i text {
  font-family: 'Roboto', 'Liberation Sans', sans-serif;
  font-size: 11px;
  text-anchor: middle;
  fill: #555;
}
.shield-i rect {
  fill: #3c78c8;
  stroke: #fff;
  stroke-width: 1;
}
.shield-i text {
  fill: #fff;
}
.map-card {
  position: absolute;
  top: 5px;
  left: 5px;
  width: 188px;
  height: 48px;
  background: #fff;
  box-shadow: 0 1px 3px rgba(0,0,0,.25);
  display: flex;
  padding: 6px 0 0 6px;
  font-size: 6px;
  color: #777;
}
.map-place {
  width: 104px;
}
.map-place strong {
  display: block;
  font-size: 7px;
  line-height: 9px;
  font-weight: 500;
  color: #555;
  margin-bottom: 4px;
}
.map-act {
  text-align: center;
  color: #6b9fe4;
  line-height: 8px;
}
.map-act-how {
  width: 40px;
  border-right: 1px solid #e6e6e6;
  height: 28px;
}
.map-act-save {
  width: 38px;
}
.map-act svg {
  width: 11px;
  height: 11px;
  margin: 0 auto 3px;
}
.map-more {
  position: absolute;
  left: 6px;
  bottom: 5px;
  color: #5a93e0;
}
.map-thumb-sv {
  position: absolute;
  left: 6px;
  bottom: 12px;
  width: 20px;
  height: 20px;
  border: 1px solid #fff;
  box-shadow: 0 0 2px rgba(0,0,0,.4);
}
.map-thumb-user {
  position: absolute;
  top: 6px;
  right: 5px;
  width: 14px;
  height: 14px;
  box-shadow: 0 0 1px #fff;
}
.map-zoom {
  position: absolute;
  right: 5px;
  bottom: 12px;
  width: 13px;
  height: 27px;
  background: #fff;
  box-shadow: 0 1px 2px rgba(0,0,0,.25);
  display: flex;
  flex-direction: column;
  font-size: 10px;
  line-height: 13px;
  text-align: center;
  font-weight: 700;
  color: #666;
}
.map-google {
  position: absolute;
  left: 257px;
  bottom: 7px;
  font-family: 'Liberation Sans', sans-serif;
  font-size: 8.500px;
  line-height: 10px;
}
.map-google b {
  font-weight: 400;
}
.map-google .g1 { color: #4285f4; }
.map-google .g2 { color: #ea4335; }
.map-google .g3 { color: #fbbc05; }
.map-google .g4 { color: #34a853; }
.map-attr {
  position: absolute;
  right: 0;
  bottom: 0;
  width: 265px;
  height: 8px;
  background: rgba(255,255,255,.7);
  display: flex;
  gap: 6px;
  padding: 0 1px;
  font-size: 6px;
  line-height: 8px;
  color: #555;
  white-space: nowrap;
}

/* aviso de windows */
.activate {
  position: absolute;
  top: 560px;
  left: 1036px;
  color: #c9c9c9;
  white-space: nowrap;
}
.activate-big {
  font-size: 19.100px;
  line-height: 24px;
}
.activate-small {
  font-size: 14.200px;
  line-height: 20px;
}

.site-foot {
  height: 19px;
  flex: none;
  background: #292929;
  position: relative;
}

/* barra de symfony */
.debug {
  height: 18px;
  flex: none;
  background: #222;
  display: flex;
  align-items: stretch;
  position: relative;
  font-family: 'Liberation Sans', sans-serif;
  font-size: 7.500px;
  line-height: 18px;
  color: #f5f5f5;
  white-space: nowrap;
}
.debug i {
  font-style: normal;
  color: #999;
  font-size: 6px;
}
.d-status {
  width: 22px;
  background: #4f805d;
  text-align: center;
}
.d-item {
  margin-left: 5px;
}
.d-route {
  margin-right: 2px;
}
.d-blue {
  margin-left: 5px;
  color: #b4dcf5;
  -webkit-text-stroke: .2px #b4dcf5;
}
.d-bold {
  margin-left: 6px;
  -webkit-text-stroke: .2px #f5f5f5;
}
.d-ico {
  width: 11px;
  height: 11px;
  margin: 3px 0 0 6px;
}
.d-ico-time {
  margin-left: 11px;
}
.d-time {
  margin-left: 4px;
}
.d-db {
  display: flex;
  align-items: center;
  gap: 4px;
  width: 60px;
  margin-left: 5px;
  padding-left: 5px;
  background: #b0413e;
  color: #fff;
  -webkit-text-stroke: .15px #fff;
}
.d-db i {
  color: #eee;
  margin-left: -2px;
}
.d-db svg {
  width: 9px;
  height: 11px;
}
.d-version {
  margin-left: auto;
  display: flex;
  align-items: center;
  gap: 5px;
  color: #b4dcf5;
  font-weight: 700;
}
.d-version svg {
  width: 9px;
  height: 9px;
}
.d-close {
  width: 18px;
  margin-left: 5px;
  background: #444;
  color: #aaa;
  text-align: center;
  font-size: 14px;
}

/* scrollbar */
.scrollbar {
  width: 17px;
  flex: none;
  background: #f1f1f1;
  display: flex;
  flex-direction: column;
  align-items: stretch;
}
.thumb {
  height: 408px;
  background: #c1c1c1;
}
.arrow {
  display: block;
  height: 15px;
  position: relative;
}
.arrow::after {
  content: "";
  position: absolute;
  left: 5px;
  top: 5px;
  border-left: 4px solid transparent;
  border-right: 4px solid transparent;
}
.arrow.up::after {
  border-bottom: 4px solid #505050;
}
.arrow.down {
  margin-top: auto;
}
.arrow.down::after {
  border-top: 4px solid #505050;
}

/* barra de tareas */
.taskbar {
  height: 40px;
  flex: none;
  background: #05060a;
  display: flex;
  position: relative;
  z-index: 2;
}
.tb-cell {
  width: 49px;
  display: flex;
  align-items: center;
  justify-content: center;
  position: relative;
}
.tb-cell.sys {
  width: 48.500px;
}
.tb-cell .tb-sys {
  width: 18px;
  height: 18px;
}
.tb-cell.app svg {
  width: 24px;
  height: 24px;
}
.tb-cell.run::after {
  content: "";
  position: absolute;
  left: 4.500px;
  right: 4.500px;
  bottom: 0;
  height: 2px;
  background: #76b9ed;
}
.tb-cell.on {
  background: #32363a;
}
.tb-cell.on::after {
  left: 0;
  right: 0;
}
.ps-t {
  font-family: 'Liberation Sans', sans-serif;
  font-size: 8px;
  font-weight: 700;
  fill: #fff;
}
.pma-t {
  font-family: 'Liberation Sans', sans-serif;
  font-size: 5.500px;
  font-weight: 700;
  font-style: italic;
  fill: #24476f;
  text-anchor: middle;
}
.boot-t {
  font-family: 'Liberation Sans', sans-serif;
  font-size: 13px;
  font-weight: 700;
  fill: #fff;
  text-anchor: middle;
}
.tray {
  margin-left: auto;
  display: flex;
  align-items: center;
  color: #fff;
  font-size: 13.500px;
}
.tray-up {
  width: 12px;
  height: 8px;
  margin-right: 9px;
}
.tray-ico {
  width: 16px;
  height: 14px;
  margin-right: 8px;
}
.tray-net {
  margin-right: 9px;
}
.tray-note {
  width: 16px;
  height: 16px;
  margin: 2px 13px 0 0;
}
.clock {
  width: 60px;
  text-align: center;
  line-height: 18px;
}
.show-desk {
  width: 1px;
  height: 40px;
  margin: 0 3px 0 11px;
  background: #555;
}
```
